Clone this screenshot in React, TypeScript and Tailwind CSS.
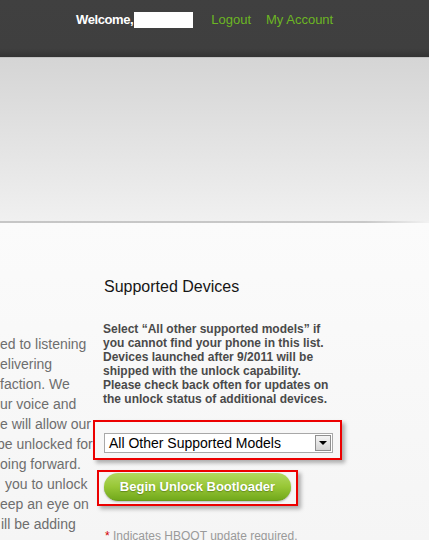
const leftLines = [
  { text: "ed to listening", className: "" },
  { text: "elivering", className: "" },
  { text: "faction. We", className: "" },
  { text: "ur voice and", className: "" },
  { text: "e will allow our", className: "" },
  { text: "be unlocked for", className: "-ml-[3px]" },
  { text: "oing forward.", className: "" },
  { text: "you to unlock", className: "pl-[5px]" },
  { text: "eep an eye on", className: "" },
  { text: "ill be adding", className: "pl-[1px]" },
];

function Header() {
  return (
    <header className="h-[57px] bg-gradient-to-b from-[#404040] via-[#3f3f3f] via-85% to-[#333333]">
      <div className="flex items-start pl-[76px] pt-[12px] text-[13px] leading-[16px]">
        <span className="font-bold tracking-[-0.4px] text-white">Welcome,</span>
        <span className="ml-[1px] h-[16px] w-[59px] bg-white" />
        <a className="ml-[18px] text-[#6cb623]">Logout</a>
        <a className="ml-[15px] text-[#6cb623]">My Account</a>
      </div>
    </header>
  );
}

function AnnotationBox({ className }: { className: string }) {
  return (
    <div
      className={[
        "pointer-events-none absolute border-2 border-[#ec0000] shadow-[3px_3px_4px_rgba(0,0,0,0.3)]",
        className,
      ].join(" ")}
    />
  );
}

function DeviceSelect() {
  return (
    <div className="relative">
      <div className="flex h-[20px] w-[229px] items-center border border-[#a8a8a8] bg-white pl-[4px] pr-[1px]">
        <span className="flex-1 text-[14px] leading-[18px] text-black">
          All Other Supported Models
        </span>
        <span className="flex h-[16px] w-[16px] items-center justify-center border border-[#8f8f8f] bg-gradient-to-b from-[#f4f4f4] to-[#d4d4d4]">
          <span className="h-0 w-0 border-x-[4px] border-t-[4px] border-x-transparent border-t-black" />
        </span>
      </div>
      <AnnotationBox className="-left-[11px] -right-[9px] -top-[13px] -bottom-[7px]" />
    </div>
  );
}

function UnlockButton() {
  return (
    <div className="relative w-[187px]">
      <button className="flex h-[28px] w-[187px] items-center justify-center rounded-full border-b border-[#6a9b1a] bg-gradient-to-b from-[#b2d85e] via-[#98c736] to-[#72a91b] text-[13px] font-bold text-white [text-shadow:0_1px_1px_rgba(60,90,10,0.5)] shadow-[0_1px_2px_rgba(0,0,0,0.25)]">
        Begin Unlock Bootloader
      </button>
      <AnnotationBox className="-left-[7px] -right-[7px] -top-[3px] -bottom-[5px]" />
    </div>
  );
}

export default function App() {
  return (
    <div className="h-[540px] w-[429px] overflow-hidden bg-[#f6f6f6] font-['Liberation_Sans',Arial,sans-serif]">
      <Header />
      <div className="h-[164px] border-t border-[#c2c2c2] bg-gradient-to-b from-[#d5d5d5] to-[#f0f0f0]" />
      <div className="h-[2px] bg-gradient-to-r from-[#c6c6c6] via-[#c8c8c8] via-85% to-[#f2f2f2]" />

      <main className="flex bg-gradient-to-b from-[#fbfbfb] to-[#f5f5f5]">
        <div className="mt-[111px] w-[96px] shrink-0 overflow-hidden text-[14px] leading-[20px] text-[#6e6e6e]">
          {leftLines.map((line) => (
            <div key={line.text} className={["whitespace-nowrap", line.className].join(" ")}>
              {line.text}
            </div>
          ))}
        </div>

        <section className="ml-[7px] mt-[55px] flex flex-col items-start">
          <h2 className="pl-[1px] text-[16px] leading-[18px] text-[#161616]">
            Supported Devices
          </h2>
          <p className="mt-[26px] whitespace-nowrap text-[12px] font-bold leading-[14px] text-[#4a4a4a]">
            Select “All other supported models” if
            <br />
            you cannot find your phone in this list.
            <br />
            Devices launched after 9/2011 will be
            <br />
            shipped with the unlock capability.
            <br />
            Please check back often for updates on
            <br />
            the unlock status of additional devices.
          </p>
          <div className="ml-[1px] mt-[27px]">
            <DeviceSelect />
          </div>
          <div className="ml-[1px] mt-[20px]">
            <UnlockButton />
          </div>
          <p className="ml-[2px] mt-[28px] text-[12px] leading-[14px] text-[#9a9a9a]">
            <span className="text-[#d40000]">*</span> Indicates HBOOT update required.
          </p>
        </section>
      </main>
    </div>
  );
}
